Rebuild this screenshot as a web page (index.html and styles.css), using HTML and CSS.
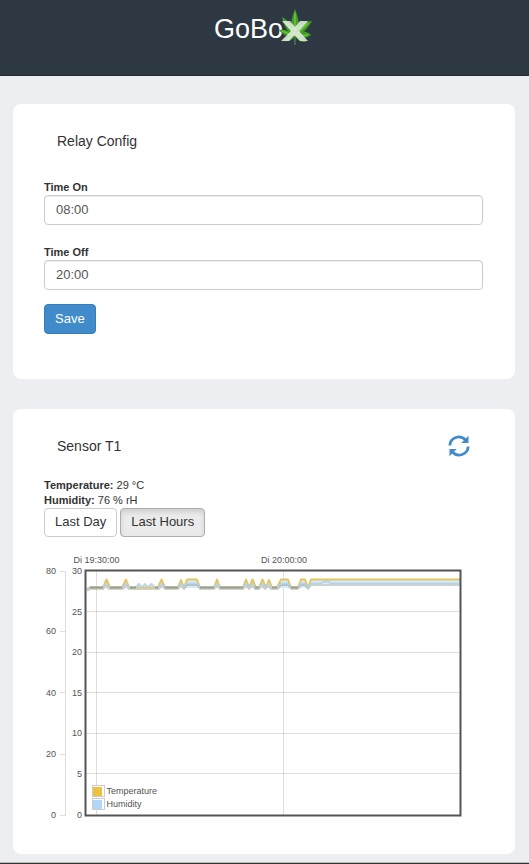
FILE: index.html
```html
<!DOCTYPE html>
<html lang="en">
<head>
<meta charset="utf-8">
<meta name="viewport" content="width=device-width, initial-scale=1">
<title>GoBox</title>
<link rel="stylesheet" href="styles.css">
</head>
<body>
<header class="topbar">
  <h1 class="brand">GoBo<svg class="leaf" viewBox="0 0 34 38" aria-hidden="true">
    <g fill="#3fa023">
      <path d="M16 28C10 20 12 12 16 1C20 12 22 20 16 28Z"/>
      <path d="M16 28C9 25 5 19 3 9C10 13 16 19 16 28Z"/>
      <path d="M16 28C16 19 22 14 33 13C29 20 24 26 16 28Z"/>
      <path d="M16 28C10 30 4 27 0 22C7 21 12 23 16 28Z"/>
      <path d="M16 28C20 22 26 22 32 27C26 31 21 31 16 28Z"/>
      <path d="M16 28C13 33 9 34 4 33C7 29 11 27 16 28Z"/>
      <path d="M16 28C21 28 25 30 27 34C22 34 18 32 16 28Z"/>
    </g>
    <path d="M16 28V5M16 28L6 13M16 28L29 15M16 28L3 23M16 28L29 27" fill="none" stroke="#7ccb45" stroke-width="1.2"/>
    <path d="M16 28V37" stroke="#718956" stroke-width="1"/>
    <path d="M3 13H11L16 19L21 13H29L20 23L29 33H21L15.500 27L10 33H2L12 23Z" fill="#eef2ec" fill-opacity=".82"/>
  </svg></h1>
</header>
<main class="page">
  <section class="card relay">
    <div class="card-head"><h2>Relay Config</h2></div>
    <form>
      <div class="field">
        <label for="time-on">Time On</label>
        <input id="time-on" type="text" value="08:00">
      </div>
      <div class="field">
        <label for="time-off">Time Off</label>
        <input id="time-off" type="text" value="20:00">
      </div>
      <button class="btn primary" type="button">Save</button>
    </form>
  </section>
  <section class="card sensor">
    <div class="card-head">
      <h2>Sensor T1</h2>
      <button class="refresh" type="button" aria-label="Refresh">
        <svg viewBox="0 0 22 22" aria-hidden="true">
          <g fill="none" stroke="#428bca" stroke-width="2.8">
            <path d="M1.8 10.5A9 9 0 0 1 17.5 5"/>
            <path d="M20.2 11.5A9 9 0 0 1 4.5 17"/>
          </g>
          <path d="M20.5 .8V8H13.3ZM1.5 21.2V14H8.7Z" fill="#428bca"/>
        </svg>
      </button>
    </div>
    <p class="reading"><b>Temperature:</b> 29 °C</p>
    <p class="reading"><b>Humidity:</b> 76 % rH</p>
    <div class="ranges">
      <button class="btn" type="button">Last Day</button>
      <button class="btn active" type="button">Last Hours</button>
    </div>
    <svg class="chart" viewBox="0 0 439 270" role="img" aria-label="Temperature and humidity over time">
      <g class="grid">
        <path d="M42 61.5H416M42 102.5H416M42 142.5H416M42 183.5H416M42 223.5H416M52.5 21V265M239.5 21V265"/>
        <path d="M16 21.5H21.5V265.5H16M16 81.5H21M16 142.5H21M16 204.5H21"/>
      </g>
      <g class="ticks" text-anchor="middle">
        <text x="52.500" y="13">Di 19:30:00</text>
        <text x="240" y="13">Di 20:00:00</text>
      </g>
      <g class="ticks" text-anchor="end">
        <text x="12" y="24">80</text><text x="12" y="84">60</text><text x="12" y="146">40</text><text x="12" y="207">20</text><text x="12" y="268">0</text>
        <text x="38" y="24">30</text><text x="38" y="65">25</text><text x="38" y="105">20</text><text x="38" y="146">15</text><text x="38" y="186">10</text><text x="38" y="227">5</text><text x="38" y="268">0</text>
      </g>
      <path class="band" d="M140 38L143 30H153L156 38ZM234 38L237 30H244L247 38ZM254 38L257 30H261L264 38ZM264 38L267 30H417V34H267Z"/>
      <path class="shadow" d="M43 40.500L46 39H59L62 35.500L65 39H79L82 35.500L85 39H115L118 35.500L121 39H134L137 35.500L140 39L143 35H153L156 39H170L173 35.500L176 39H199L202 35.500L205 39L208 35.500L211 39H215L218 35.500L221 39L224 35.500L227 39H234L237 35H244L247 39H254L257 35H261L264 39L267 35H417"/>
      <path class="temp" d="M43 39.500L46 37.500H59L62.500 29.500L66 37.500H78L82 29.500L85 37.500H114L117.500 29.500L121 37.500H134L137 30L140 37.500L143 29.500H153L156 37.500H170L173 29.500L176 37.500H199L202 29.500L205 37.500L208.500 29.500L212 37.500H215L218.500 29.500L222 37.500L225 30L228 37.500H233L237 29.500H244L247 37.500H254L257 29.500H261L264 37.500L267 29.500H417"/>
      <path class="humid" d="M43 39L46 37.500H59L62 33.500L65 37.500H79L82 33.500L85 37.500H92L95 34L98 37.500L101 34L104 37.500L107.500 34L111 37.500H115L118 33.500L121 37.500H134L137 33.500L140 37.500L143 33.500H153L156 37.500H170L173 33.500L176 37.500H199L202 33.500L205 37.500L208 33.500L211 37.500H215L218 33.500L221 37.500L224 33.500L227 37.500H234L237 33.500H244L247 37.500H254L257 33.500H261L264 37.500L267 33.500H277L280 31.500H284L287 33.500H417"/>
      <path class="base" d="M46 37.500H59M66 37.500H78M86 37.500H92M111 37.500H114M121 37.500H134M156 37.500H170M176 37.500H199M211 37.500H215M228 37.500H233M247 37.500H254"/>
      <rect class="frame" x="41.500" y="20.500" width="375" height="245"/>
      <g class="legend">
        <rect x="48.500" y="235.500" width="12" height="11"/>
        <rect x="48.500" y="248.500" width="12" height="11"/>
        <path d="M49 237H58V246H49Z" fill="#edc240"/>
        <path d="M49 250H58V259H49Z" fill="#afd8f8"/>
      </g>
      <g class="ticks">
        <text x="62.500" y="244">Temperature</text>
        <text x="62.500" y="257">Humidity</text>
      </g>
    </svg>
  </section>
</main>
<footer class="footer"></footer>
</body>
</html>
```
FILE: styles.css
```css
* { box-sizing: border-box; }

body {
  margin: 0;
  background: #edeef2;
  color: #333;
  font-family: "Liberation Sans", Arial, sans-serif;
  font-size: 11px;
  line-height: 15px;
}

h1, h2, p { margin: 0; font-weight: 400; }

.topbar {
  height: 76px;
  padding-top: 8px;
  background: #2e3842;
  border-bottom: 1px solid #2b2836;
}

.brand {
  display: flex;
  justify-content: center;
  padding-right: 2px;
  color: #fff;
  font-size: 27px;
  line-height: 42px;
}

.leaf { width: 34px; height: 38px; margin-left: -4px; }

.page {
  display: flex;
  flex-direction: column;
  gap: 30px;
  padding: 28px 14px 8px 13px;
}

.card {
  padding: 27px 32px 34px 31px;
  background: #fff;
  border-radius: 8px;
}

.relay { padding-bottom: 45px; }

.card-head {
  display: flex;
  justify-content: space-between;
  align-items: center;
  height: 20px;
  margin-bottom: 29px;
  padding: 0 13px;
}

.sensor .card-head { margin-bottom: 22px; }

.card-head h2 { font-size: 14px; line-height: 20px; }

.refresh {
  width: 22px;
  height: 22px;
  padding: 0;
  border: 0;
  background: none;
  cursor: pointer;
}

.refresh svg { display: block; }

.field { margin-bottom: 20px; }
.field + .field { margin-bottom: 14px; }

.field label { display: block; font-weight: 700; }

.field input {
  display: block;
  width: 100%;
  height: 30px;
  padding: 0 11px 2px;
  border: 1px solid #ccc;
  border-radius: 4px;
  box-shadow: inset 0 1px 1px rgba(0, 0, 0, .075);
  background: #fff;
  color: #555;
  font: inherit;
  font-size: 13px;
}

.btn {
  height: 29px;
  padding: 0 10px 2px;
  border: 1px solid #ccc;
  border-radius: 4px;
  background: #fff;
  color: #333;
  font: inherit;
  font-size: 13px;
  cursor: pointer;
}

.btn.primary { height: 30px; border-color: #357ebd; background: #428bca; color: #fff; }

.btn.active {
  border-color: #adadad;
  background: #ebebeb;
  box-shadow: inset 0 3px 5px rgba(0, 0, 0, .125);
}

.ranges { display: flex; gap: 3px; margin-bottom: 13px; }

.chart { display: block; width: 100%; }
.chart path { stroke-linejoin: round; }
.grid path { fill: none; stroke: #000; stroke-opacity: .13; }
.ticks { fill: #545454; font-size: 9px; }
.frame { fill: none; stroke: #545454; stroke-width: 2; }
.band { fill: #d9ebf7; }
.shadow { fill: none; stroke: #000; stroke-opacity: .18; stroke-width: 2; }
.temp { fill: none; stroke: #e6c561; stroke-width: 2; }
.humid { fill: none; stroke: #afd0e8; stroke-opacity: .85; stroke-width: 2; }
.base { fill: none; stroke: #9a9d88; stroke-width: 2; }
.legend rect { fill: #fff; stroke: #ccc; }

.footer { height: 2px; border-top: 1px solid #bbb; background: #333; }
```
